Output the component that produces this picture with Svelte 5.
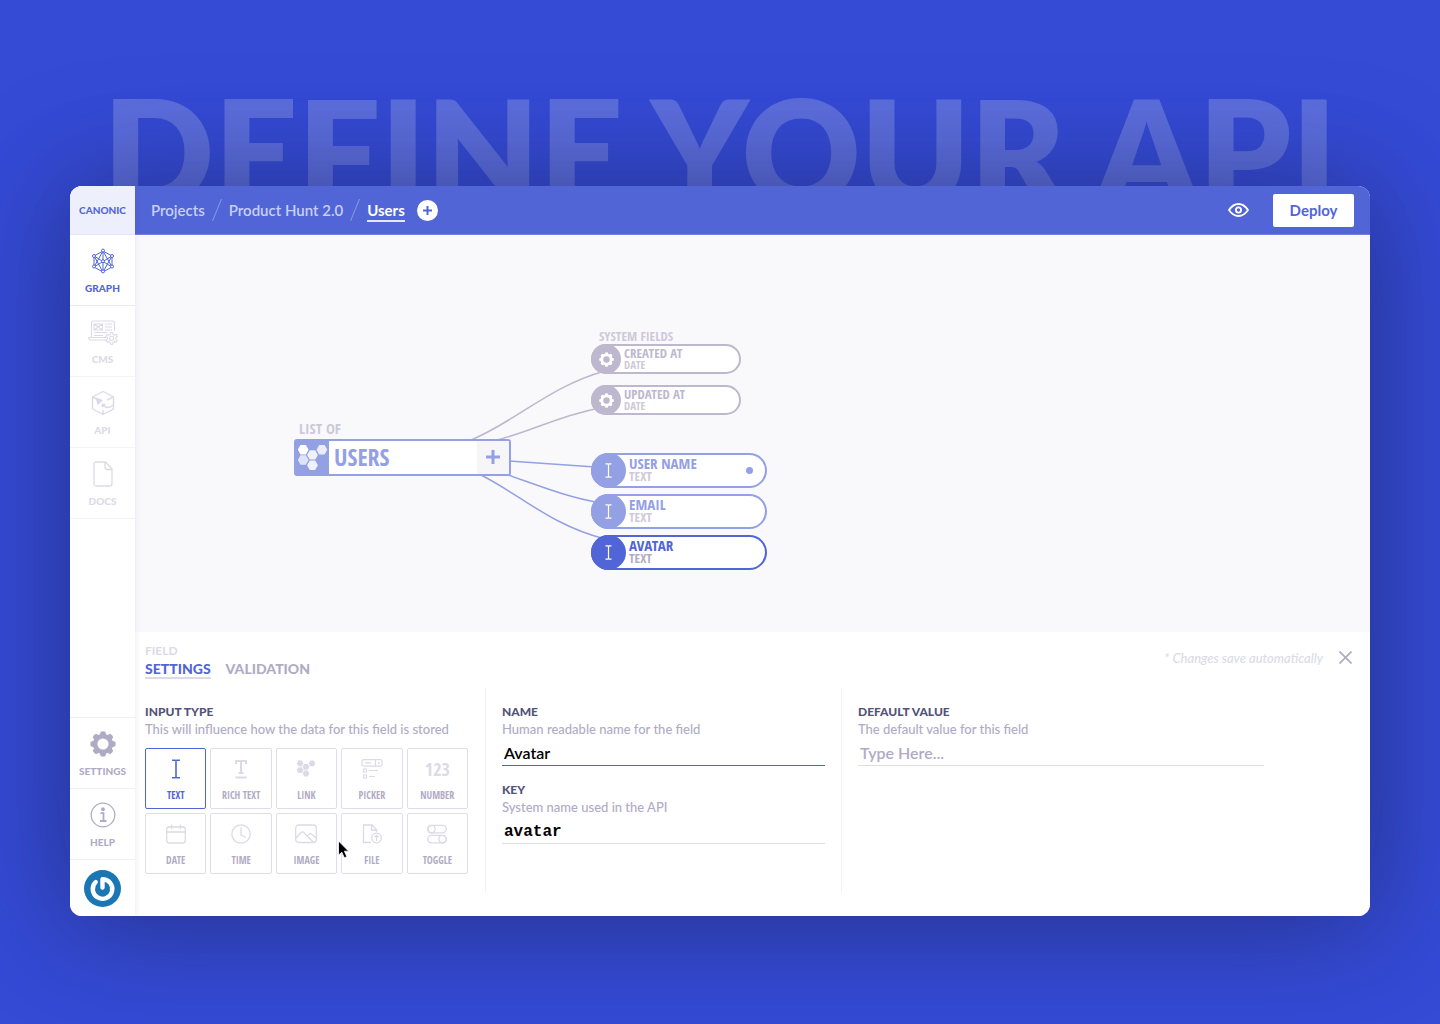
<script lang="ts">
	type FieldNode = { name: string; type: string; kind: 'system' | 'user'; x: number; y: number; dot?: boolean };

	const mainNav = ['Graph', 'CMS', 'API', 'Docs'];
	const footNav = ['Settings', 'Help'];

	const nodes: FieldNode[] = [
		{ name: 'Created at', type: 'Date', kind: 'system', x: 456, y: 109 },
		{ name: 'Updated at', type: 'Date', kind: 'system', x: 456, y: 150 },
		{ name: 'User name', type: 'Text', kind: 'user', x: 456, y: 218, dot: true },
		{ name: 'Email', type: 'Text', kind: 'user', x: 456, y: 259 },
		{ name: 'Avatar', type: 'Text', kind: 'user', x: 456, y: 300 }
	];

	const types = ['Text', 'Rich text', 'Link', 'Picker', 'Number', 'Date', 'Time', 'Image', 'File', 'Toggle'];

	let activeNav = $state('Graph');
	let activeNode = $state('Avatar');
	let activeType = $state('Text');
	let activeTab = $state('Settings');
	let name = $state('Avatar');
	let key = $state('avatar');
	let defaultValue = $state('');
</script>

{#snippet gear(size: number)}
	<svg width={size} height={size} viewBox="0 0 26 26">
		<g fill="currentColor">
			{#each [0, 45, 90, 135, 180, 225, 270, 315] as angle}
				<path d="M9.2 5 L10.8 0.8 Q13 -0.1 15.200 0.8 L16.800 5z" transform="rotate({angle} 13 13)" />
			{/each}
		</g>
		<circle cx="13" cy="13" r="7.8" fill="none" stroke="currentColor" stroke-width="4.4" />
	</svg>
{/snippet}

{#snippet cursorText(size: number)}
	<svg width={size} height={size} viewBox="0 0 20 20" fill="none" stroke="currentColor" stroke-width="1.6">
		<path d="M6 1.2h3l1 .6 1-.6h3M6 18.8h3l1-.6 1 .6h3M10 1.8v16.4" />
	</svg>
{/snippet}

{#snippet navIcon(item: string)}
	{#if item === 'Graph'}
		<svg width="24" height="26" viewBox="0 0 24 26" fill="none" stroke="currentColor" stroke-width="1">
			<path d="M12 3 21 8v11l-9 5-9-5V8zM12 3v21M12 13.500 3 8M12 13.500 21 8M12 13.500 3 19M12 13.500 21 19M12 3 3 19M12 3l9 16M3 8l9 16 9-16" />
			<g fill="#fff">
				<circle cx="12" cy="2.600" r="1.500" /><circle cx="12" cy="23.400" r="1.500" />
				<circle cx="3" cy="8" r="1.500" /><circle cx="21" cy="8" r="1.500" />
				<circle cx="3" cy="18.500" r="1.500" /><circle cx="21" cy="18.500" r="1.500" />
				<circle cx="12" cy="13.200" r="1.500" />
			</g>
		</svg>
	{:else if item === 'CMS'}
		<svg width="30" height="26" viewBox="0 0 30 26" fill="none" stroke="currentColor" stroke-width="1.1">
			<path d="M3.500 18V3.500q0-1.500 1.500-1.500h20q1.500 0 1.500 1.500V12M18 18.500H.800q0 2.500 2 2.500H18" />
			<path d="M6 5h8.500v6H6zM6 5l8.500 6M14.500 5 6 11M17 5h7M17 8h7M17 11h7M6 13.500h13M6 16.500h9" />
			<path d="m22.600 13.500 2 0 .5 1.900 1.200.7 1.900-.6 1 1.800-1.400 1.300v1.500l1.400 1.300-1 1.700-1.900-.5-1.200.7-.5 1.900h-2l-.5-1.900-1.200-.7-1.900.5-1-1.700 1.400-1.300v-1.500L18 17.300l1-1.800 1.900.6 1.200-.7z" fill="#fff" />
			<circle cx="23.600" cy="19.300" r="2.100" />
		</svg>
	{:else if item === 'API'}
		<svg width="24" height="26" viewBox="0 0 24 26" fill="none" stroke="currentColor" stroke-width="1.400" stroke-linejoin="round">
			<path d="M12 1.500 22.500 7v12L12 24.500 1.500 19V7zM1.500 7l4 2M22.500 7l-6.500 3.200M12 24v-4" />
			<path d="M5.500 8.500 11 10.500l-4 3.500z" fill="currentColor" />
			<path d="M11 14.500h3.500M11.500 15l3 2q4 1.500 7.500-2" />
			<circle cx="12" cy="15.500" r="1" fill="currentColor" />
		</svg>
	{:else if item === 'Docs'}
		<svg width="20" height="26" viewBox="0 0 20 26" fill="none" stroke="currentColor" stroke-width="1.300">
			<path d="M3.500 1h9l6.500 7v14.500q0 2.500-2.500 2.500h-13Q1 25 1 22.500v-19Q1 1 3.500 1zM12 1v5q0 2.500 2.500 2.500H19" />
		</svg>
	{:else if item === 'Settings'}
		{@render gear(26)}
	{:else}
		<svg width="26" height="26" viewBox="0 0 26 26" fill="none" stroke="currentColor" stroke-width="1.300">
			<circle cx="13" cy="13" r="11.800" />
			<circle cx="13" cy="7.300" r="1.300" fill="currentColor" />
			<path d="M10.500 11.200h3v7.500M10 19h6.500" stroke-width="1.800" />
		</svg>
	{/if}
{/snippet}

{#snippet hexes(size: number)}
	<svg width={size} height={size} viewBox="0 0 30 30" fill="currentColor">
		<path d="M2.500 2h5.400l2.700 4.700-2.700 4.700H2.500L-.2 6.700z" />
		<path d="M2.500 12.300h5.400l2.700 4.700-2.700 4.700H2.500L-.2 17z" opacity=".7" />
		<path d="M11.800 7.200h5.400l2.700 4.700-2.700 4.700h-5.400l-2.700-4.700z" opacity=".85" />
		<path d="M21.200 2h5.400l2.700 4.700-2.700 4.700h-5.400l-2.700-4.700z" opacity=".8" />
		<path d="M11.800 17.500h5.400l2.700 4.700-2.700 4.700h-5.400l-2.700-4.700z" opacity=".85" />
	</svg>
{/snippet}

{#snippet typeIcon(type: string)}
	{#if type === 'Text'}
		{@render cursorText(20)}
	{:else if type === 'Rich text'}
		<svg width="20" height="20" viewBox="0 0 20 20" fill="none" stroke="currentColor" stroke-width="2">
			<path d="M5 5V2h10v3M10 2v12M7.500 14h5M4.500 18.500h11" />
		</svg>
	{:else if type === 'Link'}
		<svg width="20" height="20" viewBox="0 0 20 20" fill="currentColor">
			<path d="M2.500 1.500h3.300L7.500 4.400 5.800 7.300H2.500L.8 4.400zM2.500 8.200h3.300l1.700 2.900L5.800 14H2.500L.8 11.100zM8.300 4.900h3.400l1.700 2.900-1.700 2.900H8.300L6.600 7.800zM14.300 1.500h3.400l1.700 2.900-1.700 2.900h-3.400l-1.700-2.900zM8.300 11.600h3.400l1.700 2.900-1.700 2.900H8.300l-1.700-2.900z" />
		</svg>
	{:else if type === 'Picker'}
		<svg width="22" height="20" viewBox="0 0 22 20" fill="none" stroke="currentColor" stroke-width="1.200">
			<rect x="1" y=".600" width="20" height="6.500" rx="1.500" />
			<path d="M4 3.800h6M14.500.500V7M17 3.300l1 1 1-1M2.500 10h3v3h-3zM2.500 16h3v3h-3zM8 11.500h9M8 17.500h6" />
		</svg>
	{:else if type === 'Number'}
		<span class="digits">123</span>
	{:else if type === 'Date'}
		<svg width="20" height="20" viewBox="0 0 20 20" fill="none" stroke="currentColor" stroke-width="1.300">
			<rect x=".700" y="3" width="18.600" height="16" rx="2.500" />
			<path d="M.700 8h18.600M5.500.500V5M14.500.500V5" />
		</svg>
	{:else if type === 'Time'}
		<svg width="20" height="20" viewBox="0 0 20 20" fill="none" stroke="currentColor" stroke-width="1.300">
			<circle cx="10" cy="10" r="9.200" />
			<path d="M10 3.500V11l5 2.500" />
		</svg>
	{:else if type === 'Image'}
		<svg width="22" height="20" viewBox="0 0 22 20" fill="none" stroke="currentColor" stroke-width="1.300">
			<rect x=".700" y="1" width="20.600" height="17.500" rx="3" />
			<path d="m.800 14 6-6q.700-.500 1.400 0l10 10M12 12.500l3-2.800q.600-.500 1.200 0L21 14" />
		</svg>
	{:else if type === 'File'}
		<svg width="20" height="20" viewBox="0 0 20 20" fill="none" stroke="currentColor" stroke-width="1.300">
			<path d="M9 18.500H1.500V1H10l4.500 4.500V8M9.500 1v5h5" />
			<circle cx="14.500" cy="14" r="4.800" />
			<path d="M14.500 17v-5.500M12.500 13.300l2-2 2 2" />
		</svg>
	{:else}
		<svg width="20" height="20" viewBox="0 0 20 20" fill="none" stroke="currentColor" stroke-width="1.300">
			<rect x=".700" y="1.400" width="18.600" height="7.400" rx="3.700" />
			<circle cx="4.500" cy="5.100" r="3.700" />
			<rect x=".700" y="11.400" width="18.600" height="7.400" rx="3.700" />
			<circle cx="15.500" cy="15.100" r="3.700" />
		</svg>
	{/if}
{/snippet}

{#snippet navItem(item: string, foot: boolean)}
	<button type="button" class="nav-item" class:foot class:active={activeNav === item} onclick={() => (activeNav = item)}>
		<span class="nav-icon">{@render navIcon(item)}</span>
		{item}
	</button>
{/snippet}

<div class="page">
	<h1>DEFINE YOUR API</h1>

	<div class="window">
		<aside class="sidebar">
			<a class="brand" href="/">CANONIC</a>
			<nav>
				{#each mainNav as item}
					{@render navItem(item, false)}
				{/each}
			</nav>
			<div class="sidebar-foot">
				{#each footNav as item}
					{@render navItem(item, true)}
				{/each}
				<button type="button" class="account" aria-label="Account">
					<svg width="37" height="37" viewBox="0 0 37 37" fill="none">
						<circle cx="18.500" cy="18.500" r="18.500" fill="#1b77b3" />
						<path
							d="M18.500 17.500V9.200A9.800 9.800 0 1 1 11.700 12"
							stroke="#fff"
							stroke-width="4.400"
							stroke-linecap="round"
							stroke-linejoin="round"
						/>
					</svg>
				</button>
			</div>
		</aside>

		<div class="main">
			<header class="topbar">
				<nav class="crumbs">
					<a href="#projects">Projects</a>
					<svg width="10" height="22" viewBox="0 0 10 22" stroke="currentColor"><path d="M9.500 0 .500 22" /></svg>
					<a href="#product-hunt">Product Hunt 2.0</a>
					<svg width="10" height="22" viewBox="0 0 10 22" stroke="currentColor"><path d="M9.500 0 .500 22" /></svg>
					<a class="current" href="#users">Users</a>
				</nav>
				<button type="button" class="add" aria-label="Add">
					<svg width="9" height="9" viewBox="0 0 9 9" stroke="currentColor" stroke-width="2"><path d="M4.500 0v9M0 4.500h9" /></svg>
				</button>
				<button type="button" class="preview" aria-label="Preview">
					<svg width="21" height="14" viewBox="0 0 21 14" fill="none" stroke="currentColor" stroke-width="1.800">
						<path d="M1 7Q5 1 10.500 1T20 7q-4 6-9.500 6T1 7z" />
						<circle cx="10.500" cy="7" r="2.600" />
					</svg>
				</button>
				<button type="button" class="deploy">Deploy</button>
			</header>

			<section class="canvas">
				<svg class="edges" width="640" height="340" viewBox="0 0 640 340" fill="none" stroke-width="1.500">
					<g stroke="#bdb8cd">
						<path d="M336 205C380 187 415 151 470 136" />
						<path d="M362 205C398 196 425 180 470 172" />
					</g>
					<g stroke="#94a0e4">
						<path d="M374 226 460 232" />
						<path d="M370 239C400 249 430 262 466 268" />
						<path d="M344 239C385 259 415 290 470 304" />
					</g>
				</svg>

				<span class="caption list-caption">LIST OF</span>
				<div class="root-node">
					<span class="root-icon">{@render hexes(30)}</span>
					<span class="root-name">USERS</span>
					<button type="button" aria-label="Add field">
						<svg width="14" height="14" viewBox="0 0 14 14" stroke="currentColor" stroke-width="3"><path d="M7 0v14M0 7h14" /></svg>
					</button>
				</div>

				<span class="caption system-caption">SYSTEM FIELDS</span>
				{#each nodes as node}
					<button
						type="button"
						class="node {node.kind}"
						class:selected={activeNode === node.name}
						style="left: {node.x}px; top: {node.y}px"
						onclick={() => (activeNode = node.name)}
					>
						<span class="node-icon">
							{#if node.kind === 'system'}
								{@render gear(15)}
							{:else}
								{@render cursorText(15)}
							{/if}
						</span>
						<span class="node-text">
							<strong>{node.name}</strong>
							<small>{node.type}</small>
						</span>
						{#if node.dot}<i class="dot"></i>{/if}
					</button>
				{/each}
			</section>

			<section class="panel">
				<div class="panel-head">
					<div>
						<p class="panel-kind">FIELD</p>
						<div class="tabs">
							{#each ['Settings', 'Validation'] as tab}
								<button type="button" class:active={activeTab === tab} onclick={() => (activeTab = tab)}>{tab}</button>
							{/each}
						</div>
					</div>
					<div class="panel-status">
						<em>* Changes save automatically</em>
						<button type="button" aria-label="Close">
							<svg width="13" height="13" viewBox="0 0 13 13" stroke="currentColor" stroke-width="1.700"><path d="M.500.500l12 12M12.500.500l-12 12" /></svg>
						</button>
					</div>
				</div>

				<div class="columns">
					<div class="column">
						<h2>Input type</h2>
						<p>This will influence how the data for this field is stored</p>
						<div class="types">
							{#each types as type}
								<button type="button" class="type" class:active={activeType === type} onclick={() => (activeType = type)}>
									<span class="type-icon">{@render typeIcon(type)}</span>
									{type}
								</button>
							{/each}
							<svg class="pointer" width="14" height="20" viewBox="0 0 14 20">
								<path d="M1.500 1v14.200l3.300-3 2.500 5.600 2.600-1.100-2.500-5.500h4.300z" fill="#000" stroke="#fff" stroke-width=".800" />
							</svg>
						</div>
					</div>

					<div class="column">
						<div class="field">
							<label for="name">Name</label>
							<p>Human readable name for the field</p>
							<input id="name" class="focused" type="text" bind:value={name} />
						</div>
						<div class="field">
							<label for="key">Key</label>
							<p>System name used in the API</p>
							<input id="key" class="mono" type="text" bind:value={key} />
						</div>
					</div>

					<div class="column">
						<div class="field wide">
							<label for="default">Default value</label>
							<p>The default value for this field</p>
							<input id="default" type="text" placeholder="Type Here..." bind:value={defaultValue} />
						</div>
					</div>
				</div>
			</section>
		</div>
	</div>
</div>

<style>
	:global(body) {
		margin: 0;
	}

	.page {
		--blue: #5165d7;
		--blue-soft: #94a0e4;
		--grey: #b0abc4;
		--grey-soft: #dcdae6;
		--condensed: 'Open Sans Condensed', 'Noto Sans Condensed', 'Roboto Condensed', 'Liberation Sans Narrow', sans-serif;

		box-sizing: border-box;
		min-height: 100vh;
		padding: 78px 70px 108px;
		overflow: hidden;
		background: #354bd6;
		font-family: Lato, sans-serif;
		color: var(--grey);
	}

	.page * {
		box-sizing: border-box;
	}

	h1,
	h2,
	p {
		margin: 0;
	}

	button {
		padding: 0;
		border: 0;
		background: none;
		font: inherit;
		color: inherit;
		cursor: pointer;
	}

	svg {
		display: block;
		flex-shrink: 0;
	}

	h1 {
		height: 108px;
		font-size: 146px;
		line-height: 144px;
		font-weight: 800;
		text-align: center;
		white-space: nowrap;
		color: rgba(255, 255, 255, 0.2);
	}

	.window {
		position: relative;
		display: flex;
		min-height: calc(100vh - 294px);
		border-radius: 12px;
		overflow: hidden;
		background: #fff;
		box-shadow:
			0 0 120px rgba(30, 35, 90, 0.4),
			0 10px 100px rgba(30, 35, 90, 0.3);
	}

	.sidebar {
		position: relative;
		z-index: 1;
		display: flex;
		flex-direction: column;
		width: 65px;
		flex-shrink: 0;
		background: #fff;
		box-shadow: 0 0 6px rgba(60, 60, 120, 0.12);
	}

	.brand {
		display: grid;
		place-items: center;
		height: 49px;
		border-bottom: 1px solid #e3e6f6;
		background: #edf0fc;
		font-size: 10px;
		font-weight: 900;
		color: var(--blue);
		text-decoration: none;
	}

	.nav-item {
		display: flex;
		flex-direction: column;
		align-items: center;
		gap: 7px;
		width: 100%;
		height: 71px;
		padding-top: 13px;
		border-bottom: 1px solid #f4f4f8;
		font-size: 10px;
		line-height: 14px;
		font-weight: 900;
		text-transform: uppercase;
		color: var(--grey-soft);
	}

	.nav-item.foot {
		border-top: 1px solid #efeff5;
		border-bottom: 0;
		color: var(--grey);
	}

	.nav-item.active {
		border-bottom-color: #ebebf2;
		color: var(--blue);
	}

	.nav-icon {
		display: grid;
		place-items: center;
		height: 26px;
	}

	.sidebar-foot {
		margin-top: auto;
	}

	.account {
		display: grid;
		place-items: center;
		width: 100%;
		height: 57px;
		border-top: 1px solid #efeff5;
	}

	.main {
		display: flex;
		flex-direction: column;
		flex: 1;
		min-width: 0;
	}

	.topbar {
		display: flex;
		align-items: center;
		height: 49px;
		padding: 0 16px;
		border-bottom: 1px solid #7381de;
		background: var(--blue);
		font-size: 15px;
		font-weight: 600;
		color: #fff;
	}

	.crumbs {
		display: flex;
		align-items: center;
		gap: 7px;
		color: #8b99e6;
	}

	.crumbs a {
		padding-top: 2px;
		line-height: 20px;
		border-bottom: 2px solid transparent;
		color: #c8cff4;
		text-decoration: none;
	}

	.crumbs .current {
		border-bottom-color: #e6e8fa;
		font-weight: 700;
		color: #fff;
	}

	.add {
		display: grid;
		place-items: center;
		width: 21px;
		height: 21px;
		margin-left: 12px;
		border-radius: 50%;
		background: #fff;
		color: var(--blue);
	}

	.preview {
		margin-left: auto;
	}

	.deploy {
		width: 81px;
		height: 33px;
		margin-left: 24px;
		border-radius: 2px;
		background: #fff;
		font-weight: 700;
		color: var(--blue);
	}

	.canvas {
		position: relative;
		flex: 1;
		min-height: 360px;
		background: #f9f9fc;
		font-family: var(--condensed);
	}

	.edges,
	.caption,
	.root-node,
	.node {
		position: absolute;
	}

	.edges {
		left: 0;
		top: 0;
	}

	.caption {
		line-height: 16px;
		font-weight: 700;
		color: #cdc9d9;
	}

	.list-caption {
		left: 164px;
		top: 185px;
		font-size: 15px;
	}

	.system-caption {
		left: 464px;
		top: 93px;
		font-size: 13px;
	}

	.root-node {
		left: 159px;
		top: 204px;
		display: flex;
		width: 217px;
		height: 37px;
		border: 2px solid var(--blue-soft);
		border-radius: 3px;
		background: #fff;
		color: var(--blue-soft);
	}

	.root-icon {
		display: grid;
		place-items: center;
		width: 33px;
		background: var(--blue-soft);
		color: #fff;
	}

	.root-name {
		flex: 1;
		padding-left: 5px;
		font-size: 24px;
		line-height: 32px;
		font-weight: 700;
	}

	.root-node button {
		display: grid;
		place-items: center;
		width: 32px;
		padding-bottom: 2px;
		background: #f6f6f9;
	}

	.node {
		display: flex;
		align-items: center;
		text-align: left;
		text-transform: uppercase;
		background: #fff;
	}

	.node.system {
		width: 150px;
		height: 30px;
		border-radius: 15px;
		box-shadow: inset 0 0 0 2px #bdb8cd;
		color: #bdb8cd;
	}

	.node.user {
		width: 176px;
		height: 35px;
		border-radius: 18px;
		box-shadow: inset 0 0 0 2px var(--blue-soft);
		color: var(--blue-soft);
	}

	.node.user.selected {
		box-shadow: inset 0 0 0 2px var(--blue);
		color: var(--blue);
	}

	.node-icon {
		display: grid;
		place-items: center;
		height: 100%;
		aspect-ratio: 1;
		border-radius: 50%;
		background: currentColor;
	}

	.node-icon :global(svg) {
		color: #fff;
	}

	.node-text {
		display: flex;
		flex-direction: column;
		padding: 0 0 2px 3px;
	}

	.node strong {
		font-size: 13px;
		line-height: 12px;
		font-weight: 700;
	}

	.node small {
		font-size: 11px;
		line-height: 11px;
		font-weight: 700;
		color: #cdc9d9;
	}

	.node.user strong {
		font-size: 15px;
		line-height: 13px;
	}

	.node.user small {
		font-size: 13px;
		line-height: 13px;
	}

	.node.selected small {
		color: var(--grey);
	}

	.dot {
		width: 7px;
		height: 7px;
		margin: 0 14px 0 auto;
		border-radius: 50%;
		background: currentColor;
	}

	.panel {
		padding: 10px 0 23px;
		background: #fff;
	}

	.panel-head {
		display: flex;
		justify-content: space-between;
		padding: 0 18px 0 10px;
	}

	.panel-kind {
		font-size: 12px;
		line-height: 18px;
		font-weight: 700;
		color: var(--grey-soft);
	}

	.tabs {
		display: flex;
		gap: 15px;
	}

	.tabs button {
		border-bottom: 2px solid transparent;
		font-size: 14px;
		line-height: 17px;
		font-weight: 900;
		text-transform: uppercase;
	}

	.tabs .active {
		border-bottom-color: var(--grey-soft);
		color: var(--blue);
	}

	.panel-status {
		display: flex;
		align-items: center;
		gap: 16px;
		height: 31px;
		font-size: 13px;
		font-weight: 500;
		color: var(--grey-soft);
	}

	.panel-status button {
		color: var(--grey);
	}

	.columns {
		display: grid;
		grid-template-columns: 350px 356px 1fr;
		min-height: 205px;
		margin-top: 9px;
	}

	.column {
		padding: 15px 16px 0;
		border-left: 1px solid #f1f1f6;
	}

	.column:first-child {
		padding-left: 10px;
		border-left: 0;
	}

	h2,
	label {
		display: block;
		font-size: 12px;
		line-height: 18px;
		font-weight: 900;
		text-transform: uppercase;
		color: #53537a;
	}

	.column p {
		font-size: 13px;
		line-height: 17px;
		font-weight: 500;
		white-space: nowrap;
	}

	.types {
		position: relative;
		display: grid;
		grid-template-columns: repeat(5, 1fr);
		gap: 4px;
		width: 323px;
		margin-top: 10px;
	}

	.type {
		display: flex;
		flex-direction: column;
		align-items: center;
		gap: 9px;
		height: 61px;
		padding-top: 10px;
		border: 1px solid #dfdee8;
		border-radius: 2px;
		font-family: var(--condensed);
		font-size: 10px;
		line-height: 14px;
		font-weight: 700;
		text-transform: uppercase;
	}

	.type-icon {
		display: grid;
		place-items: center;
		height: 20px;
		color: var(--grey-soft);
	}

	.type.active {
		border-color: var(--blue);
		color: var(--blue);
	}

	.type.active .type-icon {
		color: var(--blue);
	}

	.digits {
		font-family: 'Liberation Sans Narrow', var(--condensed);
		font-size: 18px;
		line-height: 20px;
		font-weight: 400;
	}

	.pointer {
		position: absolute;
		left: 192px;
		top: 92px;
	}

	.field {
		margin-bottom: 15px;
	}

	.field.wide {
		max-width: 406px;
	}

	input {
		display: block;
		width: 100%;
		height: 28px;
		padding: 1px 2px 0;
		border: 0;
		border-bottom: 1px solid #dfdee8;
		outline: none;
		background: none;
		font-family: inherit;
		font-size: 16px;
		font-weight: 600;
		color: #000;
	}

	input::placeholder {
		color: var(--grey);
		opacity: 1;
	}

	input.focused {
		border-bottom-color: var(--blue);
	}

	input.mono {
		padding-top: 5px;
		font-family: 'Liberation Mono', monospace;
		font-weight: 700;
	}
</style>
